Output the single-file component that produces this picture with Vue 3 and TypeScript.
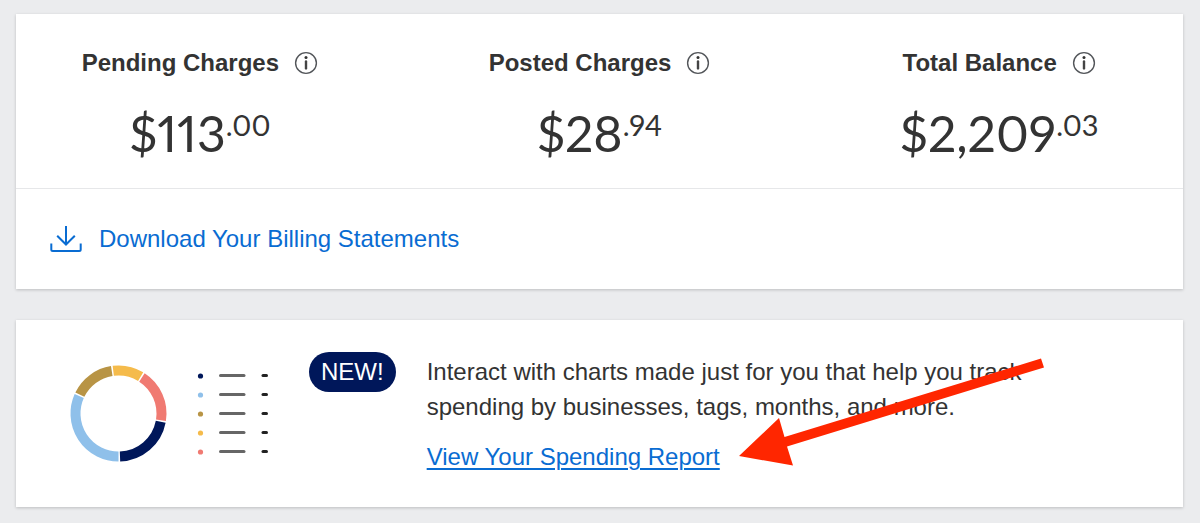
<script setup lang="ts">
interface Charge {
  label: string
  whole: string
  cents: string
}

interface Segment {
  from: number
  to: number
  color: string
}

const charges: Charge[] = [
  { label: 'Pending Charges', whole: '$113', cents: '.00' },
  { label: 'Posted Charges', whole: '$28', cents: '.94' },
  { label: 'Total Balance', whole: '$2,209', cents: '.03' },
]

// Ring segments, in degrees clockwise from the top.
const segments: Segment[] = [
  { from: -8, to: 32, color: '#f5bb4b' },
  { from: 32, to: 100, color: '#f07a72' },
  { from: 100, to: 179, color: '#00175a' },
  { from: 179, to: 295, color: '#8fc0ea' },
  { from: 295, to: 352, color: '#b89445' },
]

const legend: string[] = ['#00175a', '#8fc0ea', '#b89445', '#f5bb4b', '#f07a72']

function arc(s: Segment): string {
  const r = 43
  const pad = 1
  const point = (deg: number): string => {
    const a = (deg * Math.PI) / 180
    return `${(48.5 + r * Math.sin(a)).toFixed(2)} ${(48.5 - r * Math.cos(a)).toFixed(2)}`
  }
  return `M${point(s.from + pad)}A${r} ${r} 0 0 1 ${point(s.to - pad)}`
}
</script>

<template>
  <main class="page">
    <section class="card">
      <div class="charges">
        <div v-for="c in charges" :key="c.label" class="charge">
          <div class="heading">
            <h2>{{ c.label }}</h2>
            <button type="button" class="info" :aria-label="`About ${c.label}`">
              <svg viewBox="0 0 24 24" width="24" height="24" aria-hidden="true">
                <circle cx="12" cy="12" r="10.4" fill="none" stroke="#53565a" stroke-width="1.4" />
                <circle cx="12" cy="6.4" r="1.5" fill="#333" />
                <path d="M12 10.4V17.4" stroke="#444" stroke-width="2.4" stroke-linecap="round" />
              </svg>
            </button>
          </div>
          <p class="amount">{{ c.whole }}<span class="cents">{{ c.cents }}</span></p>
        </div>
      </div>
      <div class="statements">
        <a href="#statements" class="download">
          <svg viewBox="0 0 32 28" width="32" height="28" aria-hidden="true" fill="none" stroke="#096cd2" stroke-width="2">
            <path d="M16 1V19.5" />
            <path d="M7.2 10.7L16 19.5L24.8 10.7" />
            <path d="M1.3 18.5V24.5Q1.3 26 2.8 26H29.2Q30.7 26 30.7 24.5V18.5" />
          </svg>
          <span>Download Your Billing Statements</span>
        </a>
      </div>
    </section>

    <section class="card report">
      <svg class="chart" viewBox="0 0 200 98" width="200" height="98" aria-hidden="true">
        <path v-for="s in segments" :key="s.color" :d="arc(s)" fill="none" :stroke="s.color" stroke-width="10" />
        <g v-for="(color, i) in legend" :key="color" stroke-linecap="round" stroke-width="3">
          <circle cx="130.5" :cy="11 + i * 19" r="2.6" :fill="color" />
          <path :d="`M150.5 ${10.5 + i * 19}H174`" stroke="#666" />
          <path :d="`M193 ${10.5 + i * 19}H196.5`" stroke="#222" />
        </g>
      </svg>
      <span class="badge">NEW!</span>
      <div class="copy">
        <p>Interact with charts made just for you that help you track spending by businesses, tags, months, and more.</p>
        <a href="#report">View Your Spending Report</a>
        <svg class="arrow" viewBox="0 0 306 108" width="306" height="108" aria-hidden="true">
          <path d="M0 98L40 60L45.5 79L302 0.5L305 9.5L48 88.5L54 107.5Z" fill="#ff2600" />
        </svg>
      </div>
    </section>
  </main>
</template>

<style>
html,
body {
  margin: 0;
  background: #ebecee;
}
</style>

<style scoped>
.page {
  display: flex;
  flex-direction: column;
  gap: 31px;
  padding: 14px 17px 16px 16px;
  color: #333;
  font-family: "Liberation Sans", Arial, sans-serif;
  font-size: 24px;
}

.card {
  background: #fff;
  box-shadow: 0 1px 3px rgba(0, 0, 0, 0.2);
}

.charges {
  display: grid;
  grid-template-columns: repeat(3, 1fr);
  gap: 32px;
  padding: 31px 0 25px;
  border-bottom: 1px solid #e6e7e9;
}

.charge {
  display: flex;
  flex-direction: column;
  align-items: center;
  gap: 22px;
}

.heading {
  display: flex;
  align-items: center;
  gap: 15px;
}

h2 {
  margin: 0;
  font-size: 24px;
  line-height: 36px;
  font-weight: 700;
}

.info {
  display: flex;
  padding: 0;
  border: 0;
  background: none;
  cursor: pointer;
}

.amount {
  margin: 0;
  font-family: Lato, sans-serif;
  font-size: 50px;
  line-height: 60px;
  font-variant-numeric: proportional-nums;
  white-space: nowrap;
}

.cents {
  font-size: 29px;
  line-height: 29px;
  vertical-align: 16px;
}

.statements {
  padding: 32px 34px;
}

.download {
  display: flex;
  width: fit-content;
  align-items: center;
  gap: 17px;
  color: #096cd2;
  line-height: 36px;
  text-decoration: none;
}

.report {
  display: flex;
  align-items: flex-start;
  padding: 32px 54px 33px;
}

.chart {
  flex: none;
  margin: 13px 39px 0 0;
}

.badge {
  flex: none;
  margin-right: 31px;
  padding: 0 12px;
  border-radius: 20px;
  background: #00175a;
  color: #fff;
  line-height: 40px;
}

.copy {
  position: relative;
  max-width: 640px;
  padding-top: 2px;
  line-height: 35px;
}

.copy p {
  margin: 0 0 15px;
}

.copy a {
  color: #096cd2;
  text-decoration: underline;
  text-decoration-thickness: 2px;
  text-underline-offset: 3px;
}

.arrow {
  position: absolute;
  left: 312px;
  top: 6px;
  pointer-events: none;
}
</style>
